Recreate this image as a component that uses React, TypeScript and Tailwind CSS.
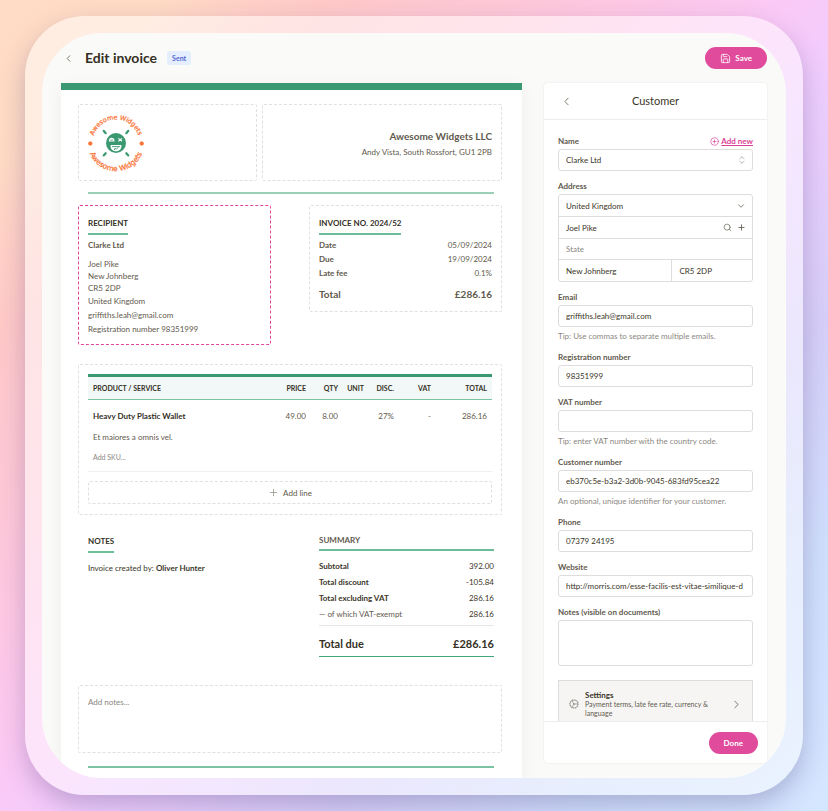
import React from 'react';
import { ChevronDown, ChevronLeft, ChevronRight, ChevronsUpDown, CirclePlus, Plus, Save, Search } from 'lucide-react';

const ADDRESS_LINES = ['Joel Pike', 'New Johnberg', 'CR5 2DP'];

const CONTACT_LINES = ['United Kingdom', 'griffiths.leah@gmail.com', 'Registration number 98351999'];

const INVOICE_DETAILS = [
  { label: 'Date', value: '05/09/2024' },
  { label: 'Due', value: '19/09/2024' },
  { label: 'Late fee', value: '0.1%' },
];

const SUMMARY_ROWS = [
  { label: 'Subtotal', value: '392.00', strong: true },
  { label: 'Total discount', value: '-105.84', strong: true },
  { label: 'Total excluding VAT', value: '286.16', strong: true },
  { label: '— of which VAT-exempt', value: '286.16', strong: false },
];

const LogoMark: React.FC = () => (
  <svg width="58" height="60" viewBox="-29 -30 58 60" role="img" aria-label="Awesome Widgets">
    <defs>
      <path id="arc-top" d="M-23.41 2A23.5 23.5 0 1 1 23.41 2" />
      <path id="arc-bottom" d="M-28.13 -2A28.2 28.2 0 1 0 28.13 -2" />
    </defs>
    <g fill="#f97334" stroke="#f97334" strokeWidth=".25" fontFamily="DejaVu Sans" textAnchor="middle">
      <text fontSize="6.4"><textPath href="#arc-top" startOffset="50%">Awesome Widgets</textPath></text>
      <text fontSize="7.3"><textPath href="#arc-bottom" startOffset="50%">Awesome Widgets</textPath></text>
      <circle cx="-25.7" cy="0.5" r="2" />
      <circle cx="25.7" cy="0.5" r="2" />
    </g>
    <g stroke="#3a9970" strokeWidth="2.2" strokeLinecap="round">
      <path d="M-12.3-12.2l2 2.4M12.3-12.2l-2 2.4M-12.3 12.4l2-2.2M12.3 12.4l-2-2.2" />
    </g>
    <circle r="10" fill="#3a9970" />
    <path d="M-7.2-1.6c0-2.6 1.2-3.6 2.8-3.6s3 1 3 3.6z" fill="#fff" />
    <path d="M-6-2.9h3" stroke="#3a9970" strokeWidth=".7" />
    <path d="M2.4-4.6l3.6 2.8M6-4.6L2.4-1.8" stroke="#fff" strokeWidth="1.2" />
    <path d="M-5.4 2H5.4v1.6A4.6 4.6 0 0 1 .8 8.2h-1.6a4.6 4.6 0 0 1-4.6-4.6z" fill="#fff" />
    <path d="M-4 3.6h8M-1.8 7l.6-1.6 1.6.6L2.4 4.4" stroke="#3a9970" strokeWidth=".9" fill="none" />
  </svg>
);

const CogIcon: React.FC = () => (
  <svg width="10" height="10" viewBox="0 0 20 20" fill="none" stroke="#8b877f" strokeWidth="1.4" aria-hidden="true">
    <circle cx="10" cy="10" r="8" />
    <circle cx="10" cy="10" r="9.2" strokeDasharray="1.6 3.2" />
    <path d="M10 10h8M10 10L6 3.1M10 10l-4 6.9" />
    <circle cx="10" cy="10" r="1.6" fill="#8b877f" stroke="none" />
  </svg>
);

const SectionHeading: React.FC<{ children: React.ReactNode }> = ({ children }) => (
  <h2 className="w-fit border-b-2 border-[#6cbd99] pb-[3px] font-bold leading-[14px] text-[#35301f]">{children}</h2>
);

const inputClass =
  'block h-[22px] w-full rounded-[3px] border border-[#dfdddb] bg-white px-[7px] text-[#3b3629] outline-none';

interface FieldProps {
  id: string;
  label: string;
  value?: string;
  tip?: string;
}

const Field: React.FC<FieldProps> = ({ id, label, value, tip }) => (
  <div>
    <label htmlFor={id} className="mb-[2px] block font-bold leading-3">{label}</label>
    <input id={id} defaultValue={value} className={inputClass} />
    {tip && <p className="mt-[3px] leading-3 text-[#8b877f]">{tip}</p>}
  </div>
);

const Invoice: React.FC = () => {
  return (
    <main className="min-w-0 flex-1 border-t-[7px] border-[#3a9970] bg-white pl-[17px] pr-5 pt-[14px] shadow-[0_4px_16px_rgba(60,50,30,0.06)]">
      <div className="flex gap-[5px]">
        <div className="flex h-[77px] w-[179px] items-center rounded-[2px] border border-dashed border-[#e2e0de] px-2">
          <LogoMark />
        </div>
        <div className="flex flex-1 flex-col justify-center rounded-[2px] border border-dashed border-[#e2e0de] px-[9px] pt-[2px] text-right">
          <p className="text-[10px] font-bold leading-4">Awesome Widgets LLC</p>
          <p className="leading-4">Andy Vista, South Rossfort, GU1 2PB</p>
        </div>
      </div>

      <hr className="ml-[10px] mr-2 mt-[11px] border-t-2 border-[#9bcfb8]" />

      <div className="mt-[11px] flex items-start justify-between">
        <section className="w-[193px] rounded-[2px] border border-dashed border-[#e0459b] px-[9px] pb-2 pt-[10px]">
          <SectionHeading>RECIPIENT</SectionHeading>
          <p className="mt-[3px] font-bold leading-[14px]">Clarke Ltd</p>
          <div className="mt-[6px] leading-3">
            {ADDRESS_LINES.map((line) => (
              <p key={line}>{line}</p>
            ))}
          </div>
          {CONTACT_LINES.map((line) => (
            <p key={line} className="leading-[14px]">{line}</p>
          ))}
        </section>

        <section className="w-[193px] rounded-[2px] border border-dashed border-[#e2e0de] px-[9px] pb-[9px] pt-[10px]">
          <SectionHeading>INVOICE NO. 2024/52</SectionHeading>
          <dl className="mt-[3px] leading-[14px]">
            {INVOICE_DETAILS.map((row) => (
              <div key={row.label} className="flex justify-between">
                <dt className="font-bold">{row.label}</dt>
                <dd>{row.value}</dd>
              </div>
            ))}
            <div className="mt-[6px] flex justify-between text-[10px] font-bold leading-4">
              <dt>Total</dt>
              <dd>£286.16</dd>
            </div>
          </dl>
        </section>
      </div>

      <section className="mt-[19px] rounded-[2px] border border-dashed border-[#e2e0de] px-[9px] pb-[10px] pt-[9px]">
        <table className="w-full table-fixed border-collapse text-right">
          <colgroup>
            <col />
            <col className="w-[45px]" />
            <col className="w-[32px]" />
            <col className="w-[26px]" />
            <col className="w-[30px]" />
            <col className="w-[37px]" />
            <col className="w-[56px]" />
          </colgroup>
          <thead>
            <tr className="border-b border-t-[3px] border-b-[#7cc3a3] border-t-[#3a9970] bg-[#f2f8f8] text-[7px] leading-[22px] text-[#35301f]">
              <th className="pl-[5px] text-left font-bold">PRODUCT / SERVICE</th>
              <th className="pr-[5px] font-bold">PRICE</th>
              <th className="pr-[5px] font-bold">QTY</th>
              <th className="pr-[5px] font-bold">UNIT</th>
              <th className="pr-[5px] font-bold">DISC.</th>
              <th className="pr-[5px] font-bold">VAT</th>
              <th className="pr-[5px] font-bold">TOTAL</th>
            </tr>
          </thead>
          <tbody>
            <tr className="border-b border-[#f0efee] align-top leading-[14px]">
              <td className="pb-2 pl-[5px] pt-[9px] text-left">
                <p className="font-bold text-[#35301f]">Heavy Duty Plastic Wallet</p>
                <p className="mt-[7px]">Et maiores a omnis vel.</p>
                <p className="mt-[7px] text-[7px] leading-3 text-[#8b877f]">Add SKU...</p>
              </td>
              <td className="pr-[5px] pt-[9px]">49.00</td>
              <td className="pr-[5px] pt-[9px]">8.00</td>
              <td />
              <td className="pr-[5px] pt-[9px]">27%</td>
              <td className="pr-[5px] pt-[9px]">-</td>
              <td className="pr-[5px] pt-[9px]">286.16</td>
            </tr>
          </tbody>
        </table>
        <button className="mt-[9px] flex h-[23px] w-full items-center justify-center gap-1 rounded-[2px] border border-dashed border-[#e2e0de]">
          <Plus size={11} strokeWidth={1.5} color="#8b877f" />
          Add line
        </button>
      </section>

      <div className="ml-[10px] mr-2 mt-[18px] flex items-start justify-between text-[#3b3629]">
        <section className="pt-px">
          <SectionHeading>NOTES</SectionHeading>
          <p className="mt-2 leading-[14px]">
            Invoice created by: <b>Oliver Hunter</b>
          </p>
        </section>

        <section className="w-[175px]">
          <h2 className="border-b-2 border-[#6cbd99] pb-[2px] font-bold leading-[14px] text-[#5f5a4e]">SUMMARY</h2>
          <dl className="mt-[7px] leading-4">
            {SUMMARY_ROWS.map((row) => (
              <div key={row.label} className="flex justify-between">
                <dt className={row.strong ? 'font-bold' : 'text-[#5f5a4e]'}>{row.label}</dt>
                <dd>{row.value}</dd>
              </div>
            ))}
            <div className="mt-[3px] flex justify-between border-b border-t border-b-[#3fa77b] border-t-[#e8e6e4] pb-[2px] pt-2 text-[11px] font-bold leading-5 text-[#35301f]">
              <dt>Total due</dt>
              <dd>£286.16</dd>
            </div>
          </dl>
        </section>
      </div>

      <textarea
        aria-label="Notes"
        placeholder="Add notes..."
        className="mt-7 block h-[68px] w-full resize-none rounded-[2px] border border-dashed border-[#e2e0de] px-[9px] py-[9px] leading-[14px] outline-none placeholder:text-[#8b877f]"
      />
      <hr className="ml-[10px] mr-2 mt-[13px] border-t-2 border-[#7cc3a3]" />
    </main>
  );
};

const CustomerPanel: React.FC = () => {
  return (
    <aside className="mb-[15px] flex w-[223px] shrink-0 flex-col overflow-hidden rounded-[4px] bg-white shadow-[0_0_2px_rgba(60,50,30,0.12)]">
      <header className="grid h-[37px] shrink-0 grid-cols-[1fr_auto_1fr] items-center border-b border-[#eeedec] px-4">
        <button aria-label="Back to settings" className="w-fit">
          <ChevronLeft size={13} strokeWidth={1.5} />
        </button>
        <h2 className="text-[11px] leading-4 text-[#3b3629]">Customer</h2>
      </header>

      <form className="min-h-0 flex-1 space-y-[9px] overflow-y-auto px-[14px] pt-[15px] [scrollbar-width:none]">
        <div>
          <div className="mb-[2px] flex items-center justify-between leading-3">
            <label htmlFor="name" className="font-bold">Name</label>
            <a href="#new" className="flex items-center gap-[2px] font-bold text-[#dc3f96] underline">
              <CirclePlus size={9} strokeWidth={1.75} />
              Add new
            </a>
          </div>
          <div className="relative">
            <select id="name" className={`${inputClass} appearance-none`}>
              <option>Clarke Ltd</option>
            </select>
            <ChevronsUpDown size={10} strokeWidth={1.5} color="#8b877f" className="pointer-events-none absolute right-[6px] top-[6px]" />
          </div>
        </div>

        <fieldset className="min-w-0">
          <legend className="mb-[2px] font-bold leading-3">Address</legend>
          <div className="divide-y divide-[#dfdddb] rounded-[3px] border border-[#dfdddb] text-[#3b3629]">
            <div className="relative">
              <select aria-label="Country" className="block h-[21px] w-full appearance-none px-[7px] outline-none">
                <option>United Kingdom</option>
              </select>
              <ChevronDown size={10} strokeWidth={1.75} color="#5f5a4e" className="pointer-events-none absolute right-[6px] top-[6px]" />
            </div>
            <div className="flex items-center gap-[5px] pr-[6px] text-[#5f5a4e]">
              <input aria-label="Street" defaultValue="Joel Pike" className="h-[21px] min-w-0 flex-1 px-[7px] text-[#3b3629] outline-none" />
              <button type="button" aria-label="Find address"><Search size={9} strokeWidth={1.75} /></button>
              <button type="button" aria-label="Add line"><Plus size={9} strokeWidth={2.25} /></button>
            </div>
            <input aria-label="State" placeholder="State" className="block h-[21px] w-full px-[7px] outline-none placeholder:text-[#8b877f]" />
            <div className="flex divide-x divide-[#dfdddb]">
              <input aria-label="City" defaultValue="New Johnberg" className="h-[21px] min-w-0 flex-[3] px-[7px] outline-none" />
              <input aria-label="Postcode" defaultValue="CR5 2DP" className="h-[21px] min-w-0 flex-[2] px-[7px] outline-none" />
            </div>
          </div>
        </fieldset>

        <Field id="email" label="Email" value="griffiths.leah@gmail.com" tip="Tip: Use commas to separate multiple emails." />
        <Field id="registration" label="Registration number" value="98351999" />
        <Field id="vat" label="VAT number" tip="Tip: enter VAT number with the country code." />
        <Field
          id="customer"
          label="Customer number"
          value="eb370c5e-b3a2-3d0b-9045-683fd95cea22"
          tip="An optional, unique identifier for your customer."
        />
        <Field id="phone" label="Phone" value="07379 24195" />
        <Field id="website" label="Website" value="http://morris.com/esse-facilis-est-vitae-similique-d" />

        <div>
          <label htmlFor="notes" className="mb-[2px] block font-bold leading-3">Notes (visible on documents)</label>
          <textarea id="notes" className="block h-[46px] w-full resize-none rounded-[3px] border border-[#dfdddb] outline-none" />
        </div>

        <button
          type="button"
          className="mt-[14px] flex w-full items-center gap-[6px] border border-[#dfdddb] bg-[#f6f5f4] py-[9px] pl-[10px] pr-[9px] text-left"
        >
          <CogIcon />
          <span className="flex-1">
            <span className="block font-bold leading-[10px] text-[#3b3629]">Settings</span>
            <span className="block text-[7px] leading-[9px]">Payment terms, late fee rate, currency & language</span>
          </span>
          <ChevronRight size={13} strokeWidth={1.5} />
        </button>
      </form>

      <footer className="flex h-[42px] shrink-0 items-center justify-end border-t border-[#eeedec] px-[9px]">
        <button className="h-[22px] rounded-full bg-[#e14b9b] px-[15px] font-bold text-white">Done</button>
      </footer>
    </aside>
  );
};

const App: React.FC = () => {
  return (
    <div className="h-screen overflow-hidden bg-[linear-gradient(135deg,#ffdcc5_0%,#ffdac5_10%,#ffc9c8_20%,#fec8dc_34%,#fbc9f6_48%,#efcdfe_55%,#d6cff9_70%,#cfdffd_84%,#d5e6ff_100%)] px-[25px] py-4 font-['Lato',sans-serif] text-[8px] text-[#5f5a4e]">
      <div className="h-full rounded-[60px] bg-white/50 p-[17px] shadow-[0_10px_24px_rgba(70,50,110,0.28)]">
        <div className="flex h-full flex-col overflow-hidden rounded-[60px] bg-[#fafaf9] px-[19px]">
          <header className="flex h-[50px] shrink-0 items-center">
            <button aria-label="Back" className="mr-[11px] pl-[2px]">
              <ChevronLeft size={11} strokeWidth={1.75} />
            </button>
            <h1 className="text-[14px] font-bold leading-5 text-[#35301f]">Edit invoice</h1>
            <span className="ml-[10px] rounded-[3px] bg-[#e4eefe] px-[5px] text-[7px] font-bold leading-[14px] text-[#5468d4]">Sent</span>
            <button className="ml-auto flex h-[22px] items-center gap-1 rounded-full bg-[#e14b9b] px-[15px] font-bold text-white">
              <Save size={11} strokeWidth={1.75} />
              Save
            </button>
          </header>

          <div className="flex min-h-0 flex-1 gap-[22px]">
            <Invoice />
            <CustomerPanel />
          </div>
        </div>
      </div>
    </div>
  );
};

export default App;
